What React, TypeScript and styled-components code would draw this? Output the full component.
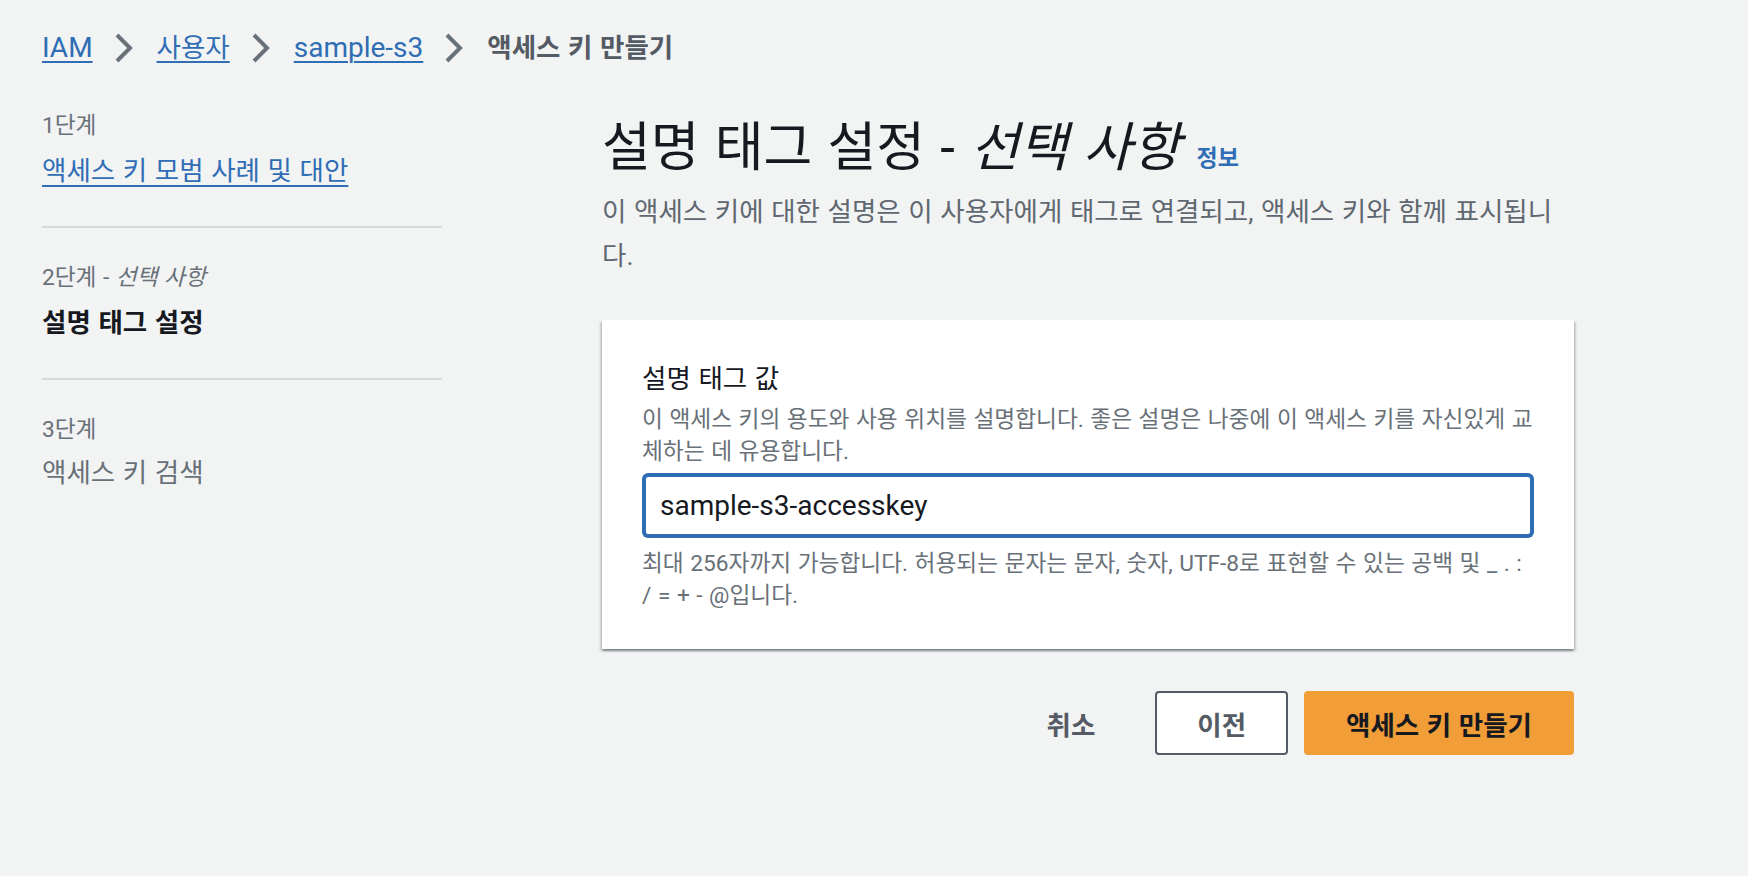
import styled, { createGlobalStyle, css } from "styled-components";

const LinkBlue = "#2f6db5";
const TextDark = "#16191f";
const TextGray = "#687078";
const ButtonGray = "#545b64";

const GlobalStyle = createGlobalStyle`
  html, body {
    margin: 0;
    padding: 0;
    background: #f2f3f3;
  }
  body {
    font-family: Roboto, "Noto Sans CJK KR", sans-serif;
    color: ${TextDark};
  }
  * {
    box-sizing: border-box;
    word-spacing: 0.04em;
  }
`;

const latin = css`
  word-spacing: normal;
`;

const Page = styled.div`
  padding: 26px 42px;
`;

const Breadcrumbs = styled.nav`
  display: flex;
  align-items: center;
  height: 44px;
`;

const CrumbLink = styled.a<{ $latin?: boolean }>`
  color: ${LinkBlue};
  font-size: ${(p) => (p.$latin ? "28px" : "26.5px")};
  line-height: 44px;
  text-decoration: underline;
  text-decoration-thickness: 2px;
  text-underline-offset: 4px;
  cursor: pointer;
  ${(p) => p.$latin && latin}
`;

const CrumbCurrent = styled.span`
  color: ${ButtonGray};
  font-size: 26.5px;
  font-weight: 700;
  line-height: 44px;
`;

const SepIcon = styled.svg`
  margin: 0 24px 0 22px;
  flex-shrink: 0;
`;

const Chevron = () => (
  <SepIcon width="18" height="30" viewBox="0 0 18 30">
    <polyline
      points="2,2 15,15 2,28"
      fill="none"
      stroke={TextGray}
      strokeWidth="4"
      strokeLinejoin="miter"
    />
  </SepIcon>
);

const Layout = styled.div`
  display: grid;
  grid-template-columns: 400px 972px;
  column-gap: 160px;
  margin-top: 40px;
  align-items: start;
`;

const StepNav = styled.ol`
  list-style: none;
  margin: 0;
  padding: 0;
`;

const Step = styled.li<{ $first?: boolean; $last?: boolean }>`
  display: flex;
  flex-direction: column;
  gap: ${(p) => (p.$last ? "5px" : "7px")};
  padding-top: ${(p) => (p.$first ? "0" : "34px")};
  padding-bottom: ${(p) => (p.$last ? "0" : "33px")};
  border-bottom: ${(p) => (p.$last ? "none" : "2px solid #d5dbdb")};
`;

const StepLabel = styled.span`
  color: ${TextGray};
  font-size: 22.7px;
  line-height: 32px;
`;

const StepLink = styled.a`
  color: ${LinkBlue};
  font-size: 26.5px;
  line-height: 44px;
  text-decoration: underline;
  text-decoration-thickness: 2px;
  text-underline-offset: 5px;
  cursor: pointer;
`;

const StepTitle = styled.span<{ $state: "current" | "disabled" }>`
  font-size: 26.5px;
  line-height: 44px;
  color: ${(p) => (p.$state === "current" ? TextDark : TextGray)};
  font-weight: ${(p) => (p.$state === "current" ? 700 : 400)};
`;

const Main = styled.main`
  display: flex;
  flex-direction: column;
`;

const Title = styled.h1`
  margin: 2px 0 0;
  font-size: 53px;
  font-weight: 400;
  line-height: 72px;
  color: ${TextDark};

  em {
    font-style: italic;
  }
`;

const InfoLink = styled.a`
  margin-left: 16px;
  font-size: 23px;
  font-weight: 700;
  line-height: 1;
  color: ${LinkBlue};
  cursor: pointer;
`;

const Description = styled.p`
  margin: 6px 0 0;
  max-width: 965px;
  font-size: 26.5px;
  line-height: 44px;
  color: #5f6770;
`;

const Card = styled.section`
  margin-top: 42px;
  padding: 37px 40px;
  background: #fff;
  box-shadow: 0 2px 2px 0 rgba(0, 28, 36, 0.3), 2px 2px 2px 0 rgba(0, 28, 36, 0.15),
    -2px 2px 2px 0 rgba(0, 28, 36, 0.15);
  display: flex;
  flex-direction: column;
`;

const FieldLabel = styled.label`
  font-size: 26.5px;
  line-height: 44px;
  color: ${TextDark};
`;

const FieldText = styled.div<{ $gap?: number }>`
  margin-top: ${(p) => p.$gap ?? 0}px;
  font-size: 22.7px;
  line-height: 32px;
  color: ${TextGray};
`;

const TextInput = styled.input`
  margin: 7px 2px 12px;
  width: calc(100% - 4px);
  height: 61px;
  padding: 0 14px;
  border: 2px solid ${LinkBlue};
  border-radius: 4px;
  box-shadow: 0 0 0 2px ${LinkBlue};
  outline: none;
  font-family: Roboto, "Noto Sans CJK KR", sans-serif;
  font-size: 28px;
  color: ${TextDark};
  background: #fff;
  ${latin}
`;

const Actions = styled.div`
  margin-top: 42px;
  display: flex;
  justify-content: flex-end;
  gap: 16px;
`;

const Button = styled.button<{ $variant: "link" | "normal" | "primary" }>`
  height: 64px;
  padding: 0 ${(p) => (p.$variant === "link" ? "42px" : "40px")};
  border-radius: 4px;
  font-family: Roboto, "Noto Sans CJK KR", sans-serif;
  font-size: 26.5px;
  font-weight: 700;
  cursor: pointer;
  border: 2px solid
    ${(p) => (p.$variant === "normal" ? ButtonGray : p.$variant === "primary" ? "#f19d38" : "transparent")};
  background: ${(p) => (p.$variant === "normal" ? "#fff" : p.$variant === "primary" ? "#f19d38" : "transparent")};
  color: ${(p) => (p.$variant === "primary" ? TextDark : ButtonGray)};
`;

export default function App() {
  return (
    <>
      <GlobalStyle />
      <Page>
        <Breadcrumbs>
          <CrumbLink $latin>IAM</CrumbLink>
          <Chevron />
          <CrumbLink>사용자</CrumbLink>
          <Chevron />
          <CrumbLink $latin>sample-s3</CrumbLink>
          <Chevron />
          <CrumbCurrent>액세스 키 만들기</CrumbCurrent>
        </Breadcrumbs>
        <Layout>
          <StepNav>
            <Step $first>
              <StepLabel>1단계</StepLabel>
              <StepLink>액세스 키 모범 사례 및 대안</StepLink>
            </Step>
            <Step>
              <StepLabel>
                2단계 - <i>선택 사항</i>
              </StepLabel>
              <StepTitle $state="current">설명 태그 설정</StepTitle>
            </Step>
            <Step $last>
              <StepLabel>3단계</StepLabel>
              <StepTitle $state="disabled">액세스 키 검색</StepTitle>
            </Step>
          </StepNav>
          <Main>
            <Title>
              설명 태그 설정 - <em>선택 사항</em>
              <InfoLink>정보</InfoLink>
            </Title>
            <Description>
              이 액세스 키에 대한 설명은 이 사용자에게 태그로 연결되고, 액세스 키와 함께 표시됩니다.
            </Description>
            <Card>
              <FieldLabel htmlFor="desc-tag">설명 태그 값</FieldLabel>
              <FieldText $gap={3}>
                이 액세스 키의 용도와 사용 위치를 설명합니다. 좋은 설명은 나중에 이 액세스 키를 자신있게 교체하는 데
                유용합니다.
              </FieldText>
              <TextInput id="desc-tag" defaultValue="sample-s3-accesskey" />
              <FieldText>
                최대 256자까지 가능합니다. 허용되는 문자는 문자, 숫자, UTF-8로 표현할 수 있는 공백 및 _ . : / = + -
                @입니다.
              </FieldText>
            </Card>
            <Actions>
              <Button $variant="link">취소</Button>
              <Button $variant="normal">이전</Button>
              <Button $variant="primary">액세스 키 만들기</Button>
            </Actions>
          </Main>
        </Layout>
      </Page>
    </>
  );
}
